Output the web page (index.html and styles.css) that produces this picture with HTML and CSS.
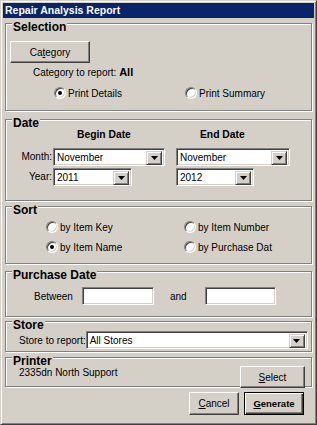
FILE: index.html
```html
<!DOCTYPE html>
<html lang="en">

<head>
	<meta charset="UTF-8">
	<title>Repair Analysis Report</title>
	<link rel="stylesheet" href="styles.css">
</head>

<body>

	<div class="window">
		<div class="titlebar">Repair Analysis Report</div>

		<div class="group group-selection">
			<div class="group-title">Selection</div>
			<div class="btn btn-category">Ca<u>t</u>egory</div>
			<div class="category-line">Category to report: <b>All</b></div>
			<div class="radio-row">
				<div class="radio-item"><span class="radio checked"></span>Print Details</div>
				<div class="radio-item"><span class="radio"></span>Print Summary</div>
			</div>
		</div>

		<div class="group group-date">
			<div class="group-title">Date</div>
			<div class="date-grid">
				<div></div>
				<div class="date-head">Begin Date</div>
				<div class="date-head">End Date</div>

				<div class="date-label">Month:</div>
				<div class="combo combo-month">
					<span class="combo-text">November</span>
					<span class="combo-arrow"><svg width="7" height="4"><path d="M0 0h7L3.5 4z" /></svg></span>
				</div>
				<div class="combo combo-month-end">
					<span class="combo-text">November</span>
					<span class="combo-arrow"><svg width="7" height="4"><path d="M0 0h7L3.5 4z" /></svg></span>
				</div>

				<div class="date-label">Year:</div>
				<div class="combo combo-year">
					<span class="combo-text">2011</span>
					<span class="combo-arrow"><svg width="7" height="4"><path d="M0 0h7L3.5 4z" /></svg></span>
				</div>
				<div class="combo combo-year-end">
					<span class="combo-text">2012</span>
					<span class="combo-arrow"><svg width="7" height="4"><path d="M0 0h7L3.5 4z" /></svg></span>
				</div>
			</div>
		</div>

		<div class="group group-sort">
			<div class="group-title">Sort</div>
			<div class="sort-grid">
				<div class="radio-item"><span class="radio"></span>by Item Key</div>
				<div class="radio-item"><span class="radio"></span>by Item Number</div>
				<div class="radio-item"><span class="radio checked"></span>by Item Name</div>
				<div class="radio-item"><span class="radio"></span>by Purchase Dat</div>
			</div>
		</div>

		<div class="group group-purchase">
			<div class="group-title">Purchase Date</div>
			<div class="purchase-row">
				<span class="between">Between</span>
				<span class="field field-from"></span>
				<span class="and">and</span>
				<span class="field field-to"></span>
			</div>
		</div>

		<div class="group group-store">
			<div class="group-title">Store</div>
			<div class="store-row">
				<span class="store-label">Store to report:</span>
				<div class="combo combo-store">
					<span class="combo-text">All Stores</span>
					<span class="combo-arrow"><svg width="7" height="4"><path d="M0 0h7L3.5 4z" /></svg></span>
				</div>
			</div>
		</div>

		<div class="group group-printer">
			<div class="group-title">Printer</div>
			<div class="printer-row">
				<span class="printer-name">2335dn North Support</span>
				<div class="btn btn-select"><u>S</u>elect</div>
			</div>
		</div>

		<div class="footer">
			<div class="btn btn-cancel"><u>C</u>ancel</div>
			<div class="btn btn-default btn-generate"><u>G</u>enerate</div>
		</div>
	</div>

</body>

</html>
```

FILE: styles.css
```css
*,
*::before,
*::after {
	box-sizing: border-box;
}

body {
	margin: 0;
	padding: 0;
	font-family: "Liberation Sans", Arial, sans-serif;
	font-size: 10px;
	color: #000;
	background-color: #d4d0c8;
}

.window {
	width: 317px;
	height: 425px;
	padding: 2px 2px 0;
	background-color: #d4d0c8;
	border: 1px solid;
	border-color: #d4d0c8 #404040 #404040 #d4d0c8;
	box-shadow: inset 1px 1px #fff, inset -1px -1px #808080;
	overflow: hidden;
}

.titlebar {
	height: 15px;
	padding-left: 2px;
	background-color: #0a246a;
	color: #fff;
	font-weight: bold;
	font-size: 10.5px;
	line-height: 15px;
}

/* group boxes */
.group {
	margin: 0 2px;
	border: 1px solid #808080;
	box-shadow: inset 1px 1px #fff, 1px 1px #fff;
}

.group-title {
	display: table;
	margin: -4px 0 0 6px;
	padding: 0 1px;
	background-color: #d4d0c8;
	font-size: 12px;
	font-weight: bold;
	line-height: 14px;
}

.group-selection {
	margin-top: 5px;
	padding-bottom: 9px;
}

.group-date {
	margin-top: 8px;
	padding-bottom: 14px;
}

.group-sort {
	margin-top: 5px;
	padding-bottom: 8px;
}

.group-purchase {
	margin-top: 7px;
	padding-bottom: 11px;
}

.group-store {
	margin-top: 4px;
	padding-bottom: 2px;
}

.group-printer {
	margin-top: 5px;
}

/* buttons */
.btn {
	display: flex;
	align-items: center;
	justify-content: center;
	background-color: #d4d0c8;
	border: 1px solid;
	border-color: #fff #404040 #404040 #fff;
	box-shadow: inset -1px -1px #808080;
}

.btn-default {
	border-color: #000;
	box-shadow: inset 1px 1px #fff, inset -1px -1px #404040, inset -2px -2px #808080;
}

.btn-category {
	width: 80px;
	height: 22px;
	margin: 7px 0 0 4px;
}

.category-line {
	margin: 2px 0 0 27px;
	line-height: 14px;
}

.category-line b {
	font-size: 11px;
}

/* radios */
.radio-row {
	display: grid;
	grid-template-columns: 131px 1fr;
	height: 16px;
	margin-top: 5px;
	padding-left: 48px;
}

.radio-item {
	display: flex;
	align-items: center;
	gap: 2px;
	height: 16px;
}

.radio {
	position: relative;
	width: 12px;
	height: 12px;
	border-radius: 50%;
	background-color: #fff;
	border: 1px solid;
	border-color: #808080 #fff #fff #808080;
	box-shadow: inset 1px 1px #404040, inset -1px -1px #d4d0c8;
}

.radio.checked::after {
	content: "";
	position: absolute;
	left: 3px;
	top: 3px;
	width: 4px;
	height: 4px;
	border-radius: 50%;
	background-color: #000;
}

/* date */
.date-grid {
	display: grid;
	grid-template-columns: 47px 123px 1fr;
	row-gap: 2px;
	margin-top: -1px;
}

.date-head {
	padding: 0 0 5px 24px;
	font-size: 10.3px;
	font-weight: bold;
	line-height: 12px;
}

.date-label {
	padding-right: 1px;
	text-align: right;
	line-height: 18px;
}

.combo {
	display: flex;
	height: 18px;
	background-color: #fff;
	border: 1px solid;
	border-color: #808080 #fff #fff #808080;
	box-shadow: inset 1px 1px #404040, inset -1px -1px #d4d0c8;
	padding: 2px;
}

.combo-text {
	flex: 1;
	padding-left: 1px;
	line-height: 14px;
	white-space: nowrap;
}

.combo-arrow {
	display: flex;
	align-items: center;
	justify-content: center;
	width: 16px;
	height: 14px;
	margin: 0;
	background-color: #d4d0c8;
	border: 1px solid;
	border-color: #d4d0c8 #404040 #404040 #d4d0c8;
	box-shadow: inset 1px 1px #fff, inset -1px -1px #808080;
}

.combo-month {
	width: 112px;
}

.combo-month-end {
	width: 114px;
}

.combo-year {
	width: 79px;
}

.combo-year-end {
	width: 78px;
}

/* sort */
.sort-grid {
	display: grid;
	grid-template-columns: 138px 1fr;
	row-gap: 4px;
	margin-top: 2px;
	padding-left: 40px;
}

/* purchase date */
.field {
	display: block;
	height: 18px;
	background-color: #fff;
	border: 1px solid;
	border-color: #808080 #fff #fff #808080;
	box-shadow: inset 1px 1px #404040, inset -1px -1px #d4d0c8;
}

.purchase-row {
	display: flex;
	align-items: center;
	height: 18px;
	margin-top: 5px;
	padding-left: 28px;
}

.between {
	width: 48px;
}

.field-from {
	width: 72px;
}

.and {
	width: 35px;
	margin-left: 16px;
}

.field-to {
	width: 71px;
}

/* store */
.store-row {
	display: flex;
	align-items: center;
	margin-top: -1px;
	padding-left: 13px;
}

.store-label {
	flex: 0 0 64px;
	white-space: nowrap;
}

.combo-store {
	width: 222px;
}

/* printer */
.printer-row {
	display: flex;
	align-items: flex-start;
	margin-top: -2px;
	padding-left: 13px;
}

.printer-name {
	line-height: 14px;
}

.btn-select {
	width: 65px;
	height: 22px;
	margin: 0 6px -2px auto;
}

/* footer */
.footer {
	display: flex;
	justify-content: flex-end;
	gap: 5px;
	margin-top: 5px;
	padding-right: 10px;
}

.btn-cancel {
	width: 50px;
	height: 23px;
}

.btn-generate {
	width: 60px;
	height: 23px;
	font-weight: bold;
	font-size: 9.5px;
}
```
